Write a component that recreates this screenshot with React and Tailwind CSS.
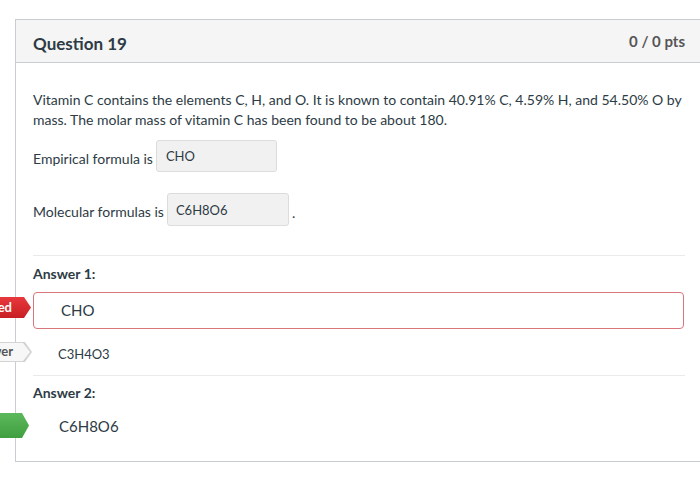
import React from "react";

function Tag({ top, height, color, text, tipX = 29, textColor = "text-white", outline }) {
  const w = 140;
  const shape = (ww) => `polygon(0 0, ${ww - 7}px 0, 100% 50%, ${ww - 7}px 100%, 0 100%)`;
  if (outline) {
    return (
      <div
        className={`absolute ${outline}`}
        style={{ top, height, left: tipX - 15 - w, width: w, clipPath: shape(w) }}
      >
        <div
          className={`absolute top-[1px] bottom-[1px] left-0 right-[2px] flex items-center justify-end pr-[17px] text-[13px] font-bold ${textColor} ${color}`}
          style={{ clipPath: shape(w - 2) }}
        >
          {text}
        </div>
      </div>
    );
  }
  return (
    <div
      className={`absolute flex items-center justify-end pr-[19px] text-[13px] font-bold ${textColor} ${color}`}
      style={{ top, height, left: tipX - 15 - w, width: w, clipPath: shape(w) }}
    >
      {text}
    </div>
  );
}

export default function App() {
  return (
    <div className="w-[700px] h-[483px] overflow-hidden bg-white" style={{ fontFamily: "Lato, 'Noto Sans', sans-serif" }}>
      <div className="relative ml-[15px] mt-[19px] w-[720px] h-[443px] border border-[#c7cdd1] text-[#2d3b45]">
        <div className="h-[43px] bg-[#f5f5f5] border-b border-[#c7cdd1] flex items-center pl-[17px] pt-[5px]">
          <div className="w-[652px] flex items-center justify-between">
            <span className="text-[17px] font-bold text-[#2d3b45]">Question 19</span>
            <span className="text-[15px] font-bold text-[#555] -mt-[4px]">0 / 0 pts</span>
          </div>
        </div>
        <div className="pl-[17px] w-[669px]">
          <p className="mt-[27px] text-[14px] leading-[20px] text-[#2d3b45]">
            Vitamin C contains the elements C, H, and O. It is known to contain 40.91% C, 4.59% H, and 54.50% O by mass. The molar mass of vitamin C has been found to be about 180.
          </p>
          <div className="mt-[10px] flex items-center h-[32px] text-[14px]">
            <span className="pt-[4px]">Empirical formula is</span>
            <span className="ml-[3px] w-[121px] h-[32px] bg-[#f1f1f1] border border-[#dcdcdc] rounded-[3px] pl-[9px] pt-[7px] text-[13px] leading-[16px]">CHO</span>
          </div>
          <div className="mt-[21px] flex items-center h-[33px] text-[14px]">
            <span className="pt-[4px]">Molecular formulas is</span>
            <span className="ml-[3px] w-[122px] h-[33px] bg-[#f1f1f1] border border-[#dcdcdc] rounded-[3px] pl-[8px] pt-[8px] text-[13px] leading-[16px]">C6H8O6</span>
            <span className="ml-[3px] mt-[6px]">.</span>
          </div>
          <div className="mt-[29px] w-[652px] border-t border-[#e8eaec]"></div>
          <div className="mt-[9px] text-[14px] font-bold leading-[18px]">Answer 1:</div>
          <div className="mt-[9px] w-[651px] h-[37px] border border-[#d9767c] rounded-[4px] flex items-center pl-[27px] text-[15px]">CHO</div>
          <div className="h-[46px] flex items-center pl-[25px] pt-[5px] text-[13px]">C3H4O3</div>
          <div className="w-[652px] border-t border-[#e8eaec]"></div>
          <div className="mt-[8px] text-[14px] font-bold leading-[18px]">Answer 2:</div>
          <div className="mt-[9px] h-[30px] flex items-center pl-[26px] text-[15px]">C6H8O6</div>
        </div>
        <Tag top={277} height={21} color="bg-gradient-to-b from-[#e8383d] to-[#c81e24]" text="You Answered" tipX={30} />
        <Tag top={322} height={20} color="bg-[#f7f7f7]" outline="bg-[#d4d4d4]" textColor="text-[#555]" text="Correct Answer" tipX={31} />
        <Tag top={393} height={25} color="bg-gradient-to-b from-[#5cb85c] to-[#3f9f3f]" text="" tipX={28} />
      </div>
    </div>
  );
}
